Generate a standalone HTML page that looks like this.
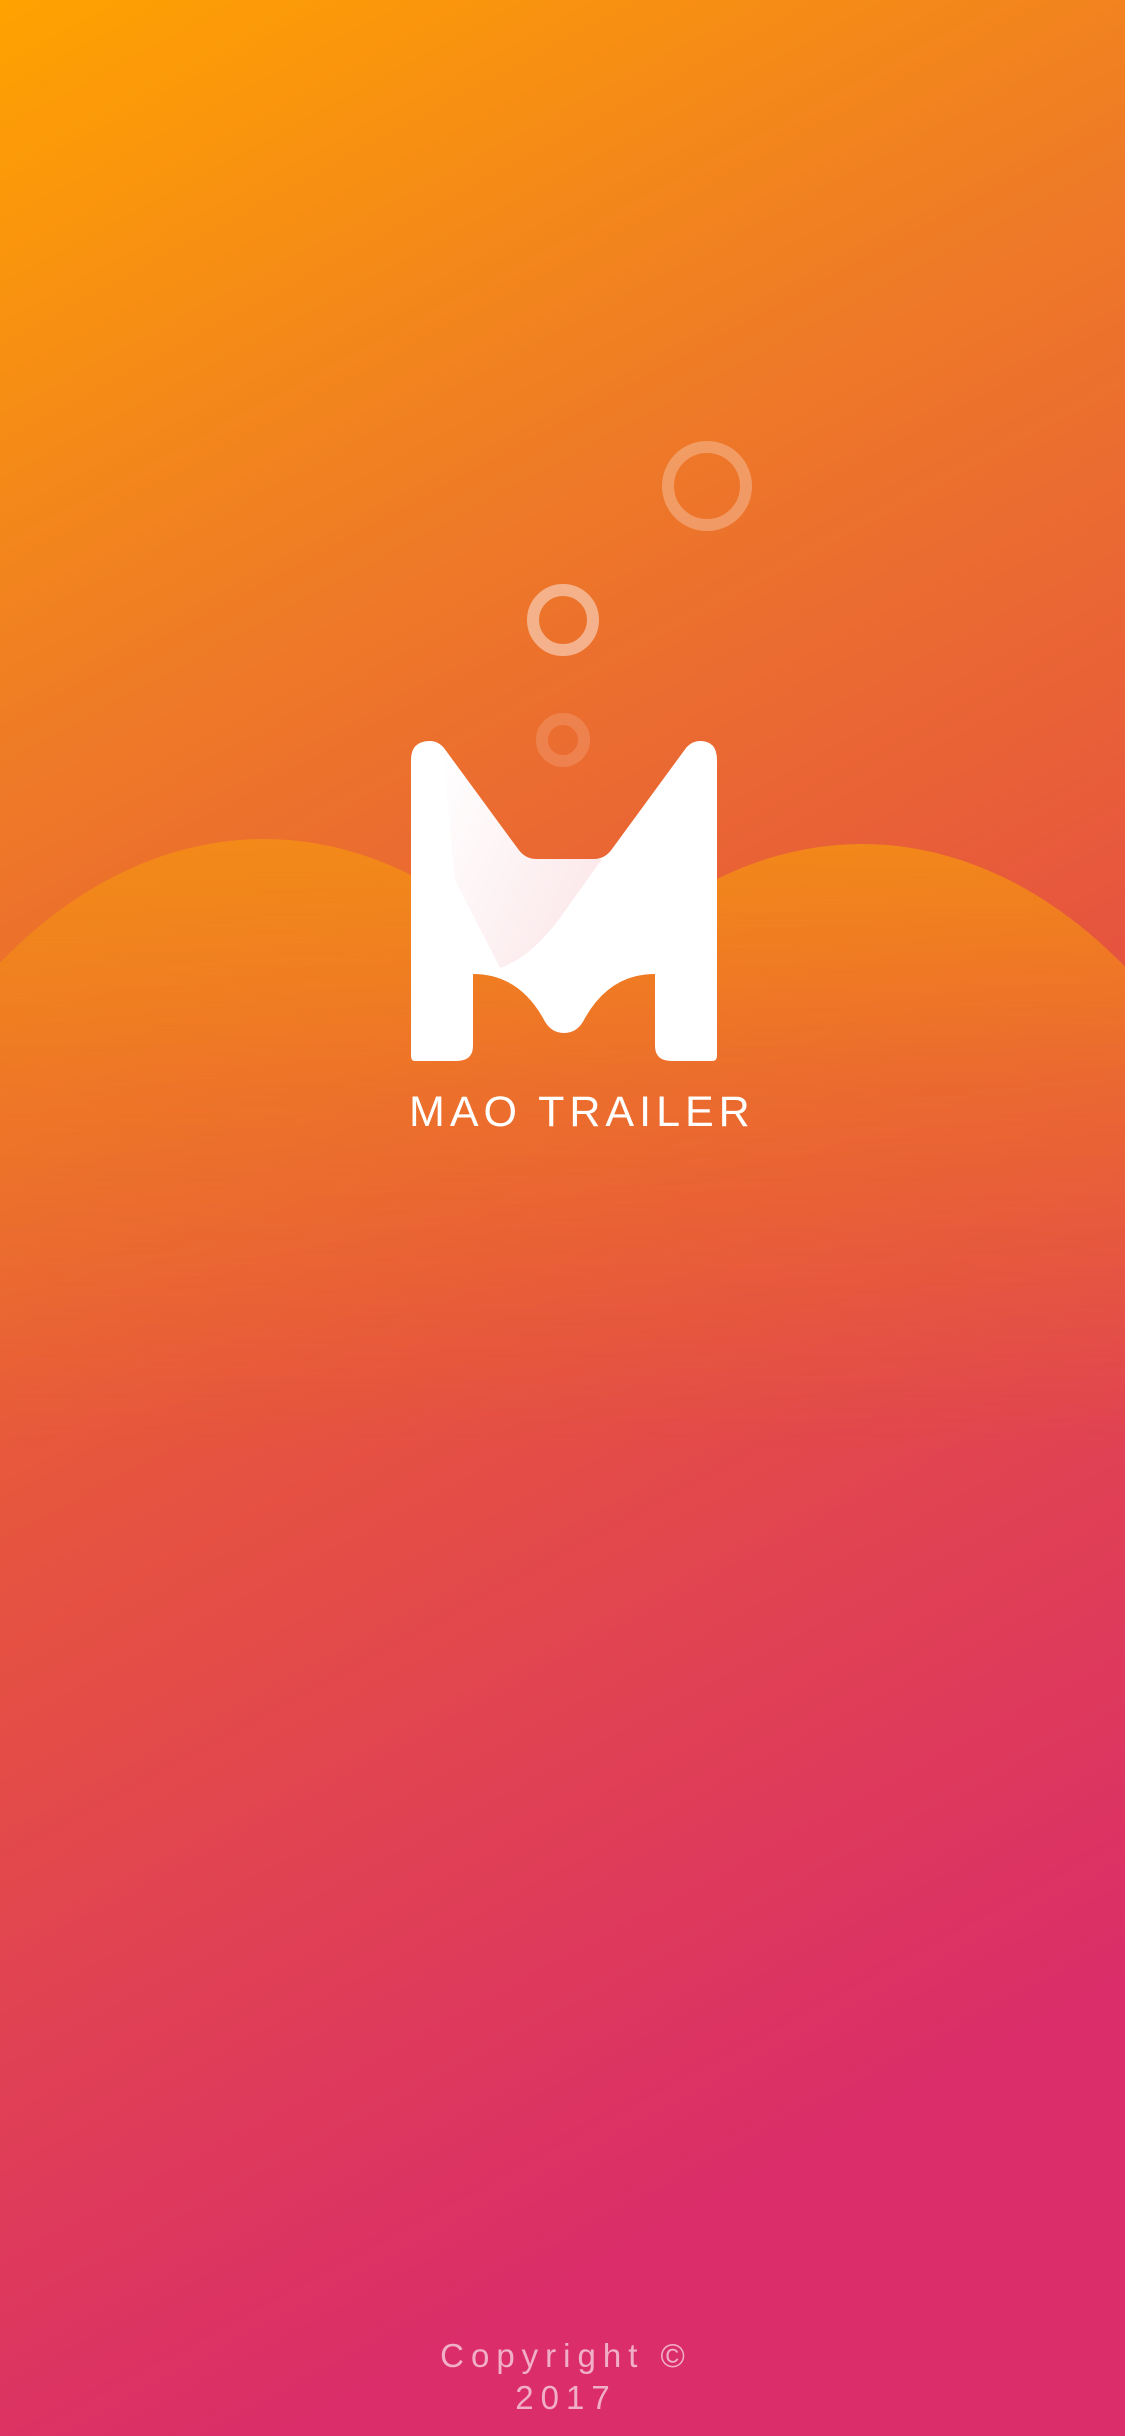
<!DOCTYPE html>
<html><head><meta charset="utf-8"><style>
html,body{margin:0;padding:0;width:1125px;height:2436px;overflow:hidden}
svg{display:block}
</style></head><body>
<svg width="1125" height="2436" viewBox="0 0 1125 2436" xmlns="http://www.w3.org/2000/svg">
<defs>
<linearGradient id="bg" x1="0" y1="0" x2="0.25" y2="1">
<stop offset="0" stop-color="#FFA200"/>
<stop offset="0.3" stop-color="#EE7A27"/>
<stop offset="0.6" stop-color="#E6543F"/>
<stop offset="1" stop-color="#DA2D69"/>
</linearGradient>
<linearGradient id="mg" gradientUnits="userSpaceOnUse" x1="0" y1="840" x2="0" y2="1450">
<stop offset="0" stop-color="#fff" stop-opacity="0.9"/>
<stop offset="0.4" stop-color="#fff" stop-opacity="0.4"/>
<stop offset="1" stop-color="#fff" stop-opacity="0"/>
</linearGradient>
<mask id="m"><rect width="1125" height="2436" fill="url(#mg)"/></mask>
<linearGradient id="sh" x1="0" y1="0" x2="1" y2="0.6">
<stop offset="0" stop-color="#FFFFFF"/>
<stop offset="1" stop-color="#FBE3E6"/>
</linearGradient>
</defs>
<rect width="1125" height="2436" fill="url(#bg)"/>
<g mask="url(#m)" fill="#F38C17">
<ellipse cx="264" cy="1589" rx="480" ry="750"/>
<ellipse cx="862" cy="1594" rx="480" ry="750"/>
</g>
<circle cx="707" cy="486" r="39" fill="none" stroke="#fff" stroke-opacity="0.28" stroke-width="12"/>
<circle cx="563" cy="620" r="30" fill="none" stroke="#fff" stroke-opacity="0.45" stroke-width="12"/>
<circle cx="563" cy="740" r="21" fill="none" stroke="#fff" stroke-opacity="0.15" stroke-width="12"/>
<path fill="#fff" d="M411,760 Q411,741 430,741 Q438,741 444,748 L518,849 Q525,859 536,859 L594,859 Q605,859 612,849 L686,748 Q692,741 700,741 Q717,741 717,760 L717,1056 Q717,1061 712,1061 L672,1061 Q655,1061 655,1046 L655,974 Q610,974 585,1018 Q578,1033 564,1033 Q550,1033 543,1018 Q518,974 473,974 L473,1046 Q473,1061 456,1061 L415,1061 Q411,1061 411,1056 Z"/>
<path fill="url(#sh)" opacity="0.8" d="M442,748 L518,849 Q525,859 536,859 L602,859 L560,918 Q530,958 500,968 L455,880 Z"/>
<text x="409" y="1126" font-family="Liberation Sans, sans-serif" font-size="43" fill="#fff" letter-spacing="5">MAO TRAILER</text>
<text x="566" y="2367" text-anchor="middle" font-family="Liberation Sans, sans-serif" font-size="33" fill="#fff" fill-opacity="0.62" letter-spacing="7">Copyright ©</text>
<text x="566" y="2409" text-anchor="middle" font-family="Liberation Sans, sans-serif" font-size="33" fill="#fff" fill-opacity="0.62" letter-spacing="7">2017</text>
</svg>
</body></html>
